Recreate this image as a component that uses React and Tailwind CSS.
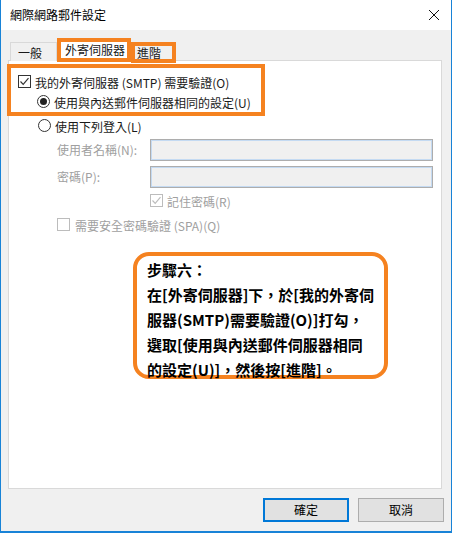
import React from "react";

const font = { fontFamily: '"Noto Sans CJK TC", "Noto Sans", sans-serif' };

function CheckBox({ checked, disabled }) {
  return (
    <div
      className={`w-[13px] h-[13px] border flex items-center justify-center bg-white ${
        disabled ? "border-[#bcbcbc]" : "border-[#333333]"
      }`}
    >
      {checked && (
        <svg width="11" height="11" viewBox="0 0 11 11">
          <path
            d="M1.5 5.5 L4.2 8.3 L9.5 2.2"
            fill="none"
            stroke={disabled ? "#bcbcbc" : "#333333"}
            strokeWidth="1.2"
          />
        </svg>
      )}
    </div>
  );
}

function Radio({ checked }) {
  return (
    <div className="w-[13px] h-[13px] rounded-full border border-[#333333] bg-white flex items-center justify-center">
      {checked && <div className="w-[7px] h-[7px] rounded-full bg-[#222222]" />}
    </div>
  );
}

function Input() {
  return (
    <div className="w-[283px] h-[22px] border border-[#adadad] bg-[#f0f0f0]">
      <div className="w-full h-full border border-[#c4daf2]" />
    </div>
  );
}

export default function App() {
  return (
    <div
      className="w-[452px] h-[533px] bg-[#f0f0f0] border-l border-r border-b-2 border-[#1883d7] flex flex-col text-[12px] text-[#1a1a1a] overflow-hidden"
      style={font}
    >
      {/* Title bar */}
      <div className="h-[30px] bg-white flex items-center justify-between pl-[9px] pr-[9px] shrink-0">
        <span className="text-[12px] text-black">網際網路郵件設定</span>
        <svg width="12" height="12" viewBox="0 0 12 12" className="mr-[2px]">
          <path d="M1 1 L11 11 M11 1 L1 11" stroke="#111" strokeWidth="1" />
        </svg>
      </div>

      {/* Tabs */}
      <div className="relative z-10 flex items-start ml-[9px] mt-[8px] -mb-[3px] h-[25px]">
        <div className="mt-[4px] w-[47px] h-[19px] border border-b-0 border-[#d9d9d9] bg-[#f0f0f0] flex items-center pl-[7px] pt-[1px]">
          一般
        </div>
        <div className="w-[74px] h-[24px] border-4 border-[#f58220] bg-white flex items-start pl-[4px] pt-[0px] leading-[16px]">
          外寄伺服器
        </div>
        <div className="mt-[4px] w-[45px] h-[21px] border-4 border-[#f58220] bg-[#f0f0f0] flex items-center pl-[2px] leading-[13px]">
          進階
        </div>
      </div>

      {/* Panel */}
      <div className="ml-[7px] w-[434px] h-[429px] border border-[#d9d9d9] bg-white flex flex-col">
        <div className="-ml-[2px] mt-[3px] w-[258px] h-[52px] border-4 border-[#f58220] flex flex-col">
          <div className="flex items-center mt-[7px] ml-[7px] gap-[4px] h-[13px]">
            <CheckBox checked />
            <span className="leading-[13px] pt-[1px]">我的外寄伺服器 (SMTP) 需要驗證(O)</span>
          </div>
          <div className="flex items-center mt-[7px] ml-[26px] gap-[4px] h-[13px]">
            <Radio checked />
            <span className="leading-[13px] pt-[1px]">使用與內送郵件伺服器相同的設定(U)</span>
          </div>
        </div>

        <div className="flex items-center mt-[3px] ml-[29px] gap-[4px] h-[13px]">
          <Radio />
          <span className="leading-[13px] pt-[1px]">使用下列登入(L)</span>
        </div>

        <div className="flex items-center mt-[7px] ml-[48px] h-[22px] text-[#a0a0a0]">
          <span className="w-[93px]">使用者名稱(N):</span>
          <Input />
        </div>
        <div className="flex items-center mt-[5px] ml-[48px] h-[22px] text-[#a0a0a0]">
          <span className="w-[93px]">密碼(P):</span>
          <Input />
        </div>
        <div className="flex items-center mt-[6px] ml-[141px] gap-[4px] h-[13px] text-[#a0a0a0]">
          <CheckBox checked disabled />
          <span className="leading-[13px] pt-[1px]">記住密碼(R)</span>
        </div>
        <div className="flex items-center mt-[11px] ml-[48px] gap-[5px] h-[13px] text-[#a0a0a0]">
          <CheckBox disabled />
          <span className="leading-[13px] pt-[1px]">需要安全密碼驗證 (SPA)(Q)</span>
        </div>

        <div className="mt-[21px] ml-[124px] w-[255px] h-[127px] border-4 border-[#f58220] rounded-[16px] pl-[10px] pt-[1px] text-[15px] font-bold leading-[25px] text-black">
          <div>步驟六：</div>
          <div>在[外寄伺服器]下，於[我的外寄伺</div>
          <div>服器(SMTP)需要驗證(O)]打勾，</div>
          <div>選取[使用與內送郵件伺服器相同</div>
          <div>的設定(U)]，然後按[進階]。</div>
        </div>
      </div>

      {/* Buttons */}
      <div className="flex justify-end gap-[9px] mt-[9px] mr-[7px]">
        <button className="w-[86px] h-[24px] border-2 border-[#0078d7] bg-[#e1e1e1] text-[12px] text-black flex items-center justify-center">
          確定
        </button>
        <button className="w-[86px] h-[24px] border border-[#adadad] bg-[#e1e1e1] text-[12px] text-black flex items-center justify-center">
          取消
        </button>
      </div>
    </div>
  );
}
